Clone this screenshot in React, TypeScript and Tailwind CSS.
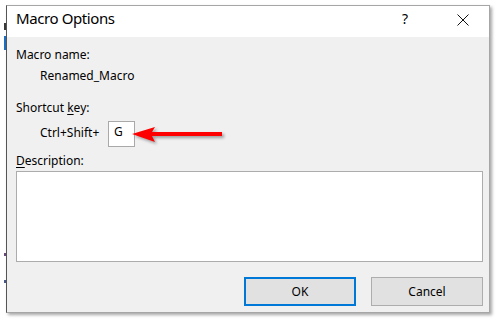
import React from "react";

// red annotation arrow pointing at the shortcut box
const RedArrow = () => (
    <svg
        width="92"
        height="26"
        viewBox="0 0 92 26"
        className="-ml-[3px] overflow-visible drop-shadow-[2px_2px_1.5px_rgba(0,0,0,0.35)]"
    >
        <path d="M0 13 L23 6 L20 11 L90 11 L90 15 L20 15 L23 21 Z" fill="#ff0000" />
    </svg>
);

const CloseIcon = () => (
    <svg width="12" height="12" viewBox="0 0 12 12" className="mt-[8px]">
        <path d="M0.5 0.5 L11.5 11.5 M11.5 0.5 L0.5 11.5" stroke="#111" strokeWidth="1" fill="none" />
    </svg>
);

export default function App() {
    return (
        <div className="w-[499px] h-[322px] bg-white flex items-start overflow-hidden font-['Noto_Sans',sans-serif] text-black">
            {/* bits of the window behind the dialog */}
            <div className="w-[6px] h-full flex flex-col items-end">
                <div className="mt-[23px] w-[2px] h-[7px] bg-[#3a3a3a]" />
                <div className="mt-[6px] w-[2px] h-[14px] bg-[#1f6fc5]" />
                <div className="mt-[203px] w-[2px] h-[3px] bg-[#6a4a7a]" />
                <div className="mt-[24px] w-[2px] h-[3px] bg-[#4a5a8a]" />
            </div>

            <div className="mt-[5px] w-[484px] h-[308px] flex flex-col bg-[#f0f0f0] border border-[#a6a6a6] border-l-[#555555] shadow-[2px_2px_3px_rgba(0,0,0,0.35)]">
                {/* title bar */}
                <div className="h-[31px] bg-white flex items-start pl-[9px] pr-[20px]">
                    <span className="pt-[2px] text-[15px] leading-5 tracking-[-0.4px]">Macro Options</span>
                    <div className="flex-1" />
                    <span className="w-[10px] mt-[4px] text-center text-[14px] leading-[18px]">?</span>
                    <div className="w-[47px]" />
                    <CloseIcon />
                </div>

                {/* body */}
                <div className="flex-1 flex flex-col pl-[9px] pr-[6px] pt-[10px] pb-[6px] text-[12px] leading-4">
                    <div>Macro name:</div>
                    <div className="mt-[5px] pl-[24px]">Renamed_Macro</div>

                    <div className="mt-[16px]">
                        Shortcut <span className="underline underline-offset-2">k</span>ey:
                    </div>
                    <div className="mt-[5px] pl-[24px] flex items-start">
                        <span className="w-[68px] mt-[4px]">Ctrl+Shift+</span>
                        <div className="w-[27px] h-[26px] bg-white border border-[#a9a9a9] pl-[5px] pt-[2px]">G</div>
                        <RedArrow />
                    </div>

                    <div className="mt-[6px]">
                        <span className="underline underline-offset-2">D</span>escription:
                    </div>
                    <div className="mt-[2px] h-[91px] bg-white border border-[#acacac]" />

                    <div className="mt-[15px] flex justify-end gap-[15px]">
                        <button className="w-[112px] h-[29px] bg-[#e1e1e1] border-2 border-[#0078d7] flex items-center justify-center">
                            OK
                        </button>
                        <button className="w-[112px] h-[29px] bg-[#e1e1e1] border border-[#adadad] flex items-center justify-center">
                            Cancel
                        </button>
                    </div>
                </div>
            </div>
        </div>
    );
}
